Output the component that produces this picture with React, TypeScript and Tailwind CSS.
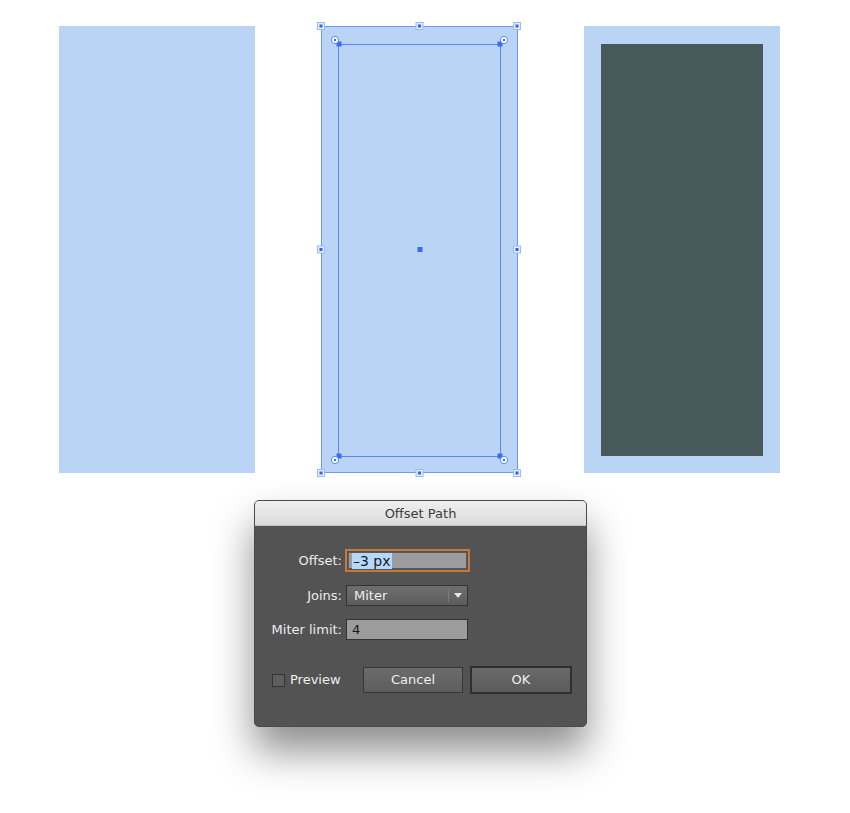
import React from 'react';

const font = { fontFamily: '"DejaVu Sans", "Liberation Sans", sans-serif' };

// selection overlay drawn on top of the middle shape
function SelectionOverlay() {
  const handles: [number, number][] = [
    [0, 0], [98.5, 0], [196, 0],
    [0, 223.5], [196, 223.5],
    [0, 447], [98.5, 447], [196, 447],
  ];
  const widgets: [number, number][] = [[14, 14], [183, 14], [14, 434], [183, 434]];
  const anchors: [number, number][] = [[18, 18], [179, 18], [18, 430], [179, 430]];

  return (
    <svg
      className="absolute left-0 top-0 overflow-visible"
      width={197}
      height={447}
      viewBox="0 0 197 447"
    >
      <rect x={0.5} y={0.5} width={196} height={446} fill="none" stroke="#6e96f6" strokeWidth={1} />
      <rect x={17.5} y={18.5} width={162} height={412} fill="none" stroke="#5b87f5" strokeWidth={1} />
      {anchors.map(([x, y], i) => (
        <rect key={`a${i}`} x={x - 2.5} y={y - 2.5} width={5} height={5} fill="#3a6cf3" />
      ))}
      {widgets.map(([x, y], i) => (
        <g key={`w${i}`}>
          <circle cx={x} cy={y} r={3.6} fill="#ffffff" stroke="#5b87f5" strokeWidth={1} />
          <circle cx={x} cy={y} r={1.2} fill="#3a6cf3" />
        </g>
      ))}
      {handles.map(([x, y], i) => (
        <g key={`h${i}`}>
          <rect x={x - 3.5} y={y - 3.5} width={7} height={7} fill="#e4edfd" stroke="#9cb9f8" strokeWidth={1} />
          <rect x={x - 1.5} y={y - 1.5} width={3} height={3} fill="#2f63f2" />
        </g>
      ))}
      <rect x={96.5} y={221} width={5} height={5} fill="#3a6cf3" />
    </svg>
  );
}

function Dialog() {
  return (
    <div
      className="w-[333px] h-[227px] rounded-[5px] overflow-hidden bg-[#535353] shadow-[0_24px_40px_rgba(0,0,0,0.45)] border border-[#4a4a4a]"
      style={font}
    >
      {/* Title bar */}
      <div className="h-[25px] flex items-center justify-center bg-gradient-to-b from-[#efefef] to-[#dcdcdc] border-b border-[#c4c4c4] text-[13px] text-[#3c3c3c] pt-px">
        Offset Path
      </div>

      <div className="pt-[23px] text-[13px] text-[#ececec]">
        {/* Offset */}
        <div className="flex items-center">
          <label className="w-[87px] text-right">Offset:</label>
          <div className="ml-[3px] w-[125px] h-[23px] border-2 border-[#c5793a] p-px">
            <div className="h-full bg-[#9c9c9c] border border-[#5a5a5a] flex items-center pl-[3px]">
              <span className="bg-[#b4d8fe] text-[#1a1a1a] text-[14px] leading-[16px] px-px">–3 px</span>
            </div>
          </div>
        </div>

        {/* Joins */}
        <div className="flex items-center mt-[13px]">
          <label className="w-[87px] text-right">Joins:</label>
          <div className="ml-[4px] w-[122px] h-[21px] border border-[#333333] bg-gradient-to-b from-[#6e6e6e] to-[#5c5c5c] flex items-center">
            <span className="flex-1 pl-[7px] text-[#efefef]">Miter</span>
            <span className="h-[13px] w-px bg-[#3a3a3a] border-r border-[#7a7a7a]" />
            <span className="w-[18px] flex justify-center">
              <svg width="8" height="6" viewBox="0 0 8 6">
                <path d="M0 0 H8 L4 5 Z" fill="#e6e6e6" />
              </svg>
            </span>
          </div>
        </div>

        {/* Miter limit */}
        <div className="flex items-center mt-[13px]">
          <label className="w-[87px] text-right">Miter limit:</label>
          <div className="ml-[4px] w-[122px] h-[21px] border border-[#333333] bg-[#9c9c9c] flex items-center pl-[5px] text-[#1a1a1a]">
            4
          </div>
        </div>

        {/* Buttons */}
        <div className="flex items-center mt-[26px] pl-[17px]">
          <div className="flex items-center gap-[5px] w-[91px]">
            <span className="w-[13px] h-[13px] border border-[#353535] bg-[#5e5e5e]" />
            <span className="text-[#efefef]">Preview</span>
          </div>
          <button className="w-[100px] h-[26px] border border-[#363636] bg-gradient-to-b from-[#6c6c6c] to-[#5d5d5d] text-[#efefef] text-[13px]">
            Cancel
          </button>
          <button className="ml-[7px] w-[102px] h-[28px] border-2 border-[#2f2f2f] bg-gradient-to-b from-[#6a6a6a] to-[#5b5b5b] text-[#efefef] text-[13px]">
            OK
          </button>
        </div>
      </div>
    </div>
  );
}

export default function App() {
  return (
    <div className="w-[850px] h-[813px] bg-white overflow-hidden">
      <div className="flex gap-[66px] pl-[59px] pt-[26px]">
        {/* original shape */}
        <div className="w-[196px] h-[447px] bg-[#b9d4f4]" />

        {/* selected shape with offset path outline */}
        <div className="relative w-[197px] h-[447px] bg-[#b9d4f4]">
          <SelectionOverlay />
        </div>

        {/* result */}
        <div className="w-[196px] h-[447px] bg-[#b9d4f4] pt-[18px] pl-[17px]">
          <div className="w-[162px] h-[412px] bg-[#48595c]" />
        </div>
      </div>

      <div className="pl-[254px] pt-[27px]">
        <Dialog />
      </div>
    </div>
  );
}
